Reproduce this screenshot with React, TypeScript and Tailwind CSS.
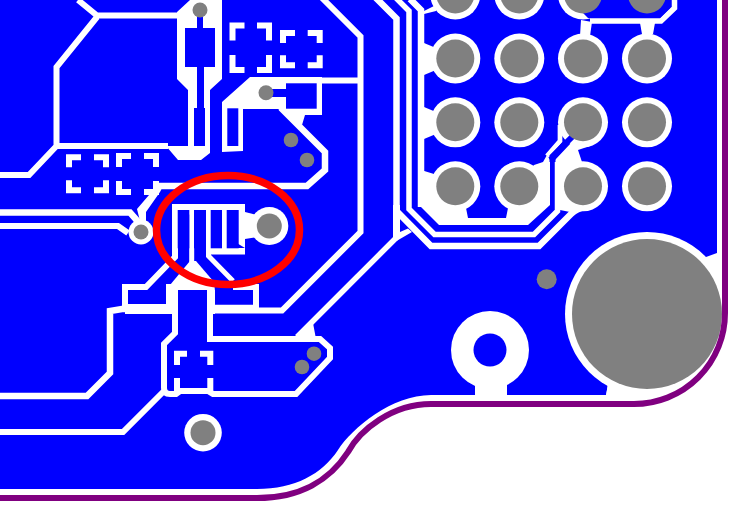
const BLUE = "#0000ff"
const GRAY = "#808080"
const WHITE = "#ffffff"

const bga = [455.3, 519.3, 583, 647]
const rows = [-5.5, 58.5, 122.3, 186.3]

// four L shaped silkscreen corners, drawn as one stroked path
const corners = (x: number, y: number, w: number, h: number, ax: number, ay: number) => {
  const t = 3
  const r = x + w
  const b = y + h
  return [
    `M${x + ax} ${y + t}H${x + t}V${y + ay}`,
    `M${r - ax} ${y + t}H${r - t}V${y + ay}`,
    `M${x + ax} ${b - t}H${x + t}V${b - ay}`,
    `M${r - ax} ${b - t}H${r - t}V${b - ay}`,
  ].join("")
}

const whitePolys = [
  // top component
  "177,12 190,0 222,0 222,79 210,90 210,153 201,160 178,160 166,146 188,146 188,90 177,79",
  // pad with via, upper right
  "250,77 322,77 322,115 305,115 302,125 278,109 243,109 243,151 222,152 222,102",
  // fanout around the left via
  "137,209 155,188 163,186 160,192 146,212 146,222 141,225",
  // fingers and via neck
  "172,204 245,204 245,212 257,215 257,237 245,239 245,254.5 206,254.5 206,248 245,248",
  "190,261 196,261 214,282 215,291 165,291",
  "166,284 178,284 178,314 166,314",
  "233,284 259,284 259,307 253,307 253,290 233,290",
  "207,290 215,290 215,314 207,314",
  "125,304 175,304 175,314 125,314",
  "215,304.5 259,304.5 259,312.7 215,312.7",
  "297,337 313,323 316,339",
  // junction of the outer trace
  "393,205 400,205 400,232 408,228.5 412,232 396.5,241 393,237",
  // hole tab
  "475,380 507,380 507,396 475,396",
  // big pad wedge
  "608,383 606,396 660,396 660,360",
  // BGA plane left
  "421,170 434,174 455,186 466,208 468,218 506,218 508,208 519,186 534,165 543,162 547,155 550,160 550,205 528,225 439,225 421,207",
  // BGA plane right
  "555,160 571,143 590,146 578,150 583,165 583,205 570,212 560,210 555,208",
  // spokes into the first column
  "424,11 436,5 436,11 424,14",
  "424,43 436,48 436,70 424,75",
  "424,107 436,112 436,134 424,139",
  "581,20 580,36 590,36 592,22",
  "640,23 642,34 653,34 655,23",
]

const whiteLines = [
  { d: "M78 0L97 15.5H178M97 17L56.5 67V146H168M56.5 146L29 175H0", w: 6 },
  { d: "M322 -2L360.5 36.5V232L282 310.5H213", w: 6 },
  { d: "M250 80.5H360", w: 6 },
  { d: "M281 108L325 152V170L307 186H158", w: 6.5 },
  { d: "M0 212.5H130L141 225", w: 6.5 },
  { d: "M0 226H118L128 233", w: 6 },
  { d: "M125 306V287H146L175 257V207H241", w: 6 },
  { d: "M191.7 210V262", w: 5 },
  { d: "M208.5 210V256L233 281", w: 5 },
  { d: "M224.5 210V248", w: 5 },
  { d: "M0 396H87L110 373V311L122 309H175", w: 6.5 },
  { d: "M0 432H123L164 391", w: 6 },
  { d: "M175 305V333L164 344V388Q164 394 170 394H176L180 391H208L213 394H296L330 358V348L320 339H210V290", w: 6 },
  { d: "M396.5 237.5L297 337", w: 5.5 },
  { d: "M375 -3L396.5 18.5V211L431 246H539L571 214Q577 208 586 207", w: 6.5 },
  { d: "M396 -2L409 11V209L434.5 234.5H534L557.5 211V160", w: 5.5 },
  { d: "M410 -1L421 10V207", w: 6.5 },
  { d: "M547 156L560 141V125", w: 4.7 },
  { d: "M590 21H661L674.5 8V0", w: 5.5 },
]

const bluePads = [
  { x: 185, y: 28, w: 30, h: 39 },
  { x: 197, y: 17, w: 6, h: 12 },
  { x: 197, y: 66, w: 7, h: 43 },
  { x: 194, y: 108, w: 11, h: 38 },
  { x: 286, y: 83.3, w: 30.7, h: 25.4 },
  { x: 272, y: 89, w: 15, h: 8 },
  { x: 227.3, y: 108.3, w: 11, h: 37.7 },
  { x: 177.7, y: 210, w: 11.6, h: 38.3 },
  { x: 194, y: 210, w: 12, h: 38.3 },
  { x: 210.7, y: 210, w: 11.3, h: 38.3 },
  { x: 226.7, y: 210, w: 12, h: 38.3 },
  { x: 128, y: 290, w: 38, h: 14 },
  { x: 178, y: 290, w: 29, h: 51 },
  { x: 215, y: 290, w: 38, h: 14.5 },
]

const vias = [
  { x: 200, y: 10, r: 7.5 },
  { x: 266, y: 92.7, r: 7.5 },
  { x: 291, y: 140, r: 7.3 },
  { x: 307, y: 160, r: 7.3 },
  { x: 141, y: 232, r: 7.5 },
  { x: 314, y: 353.7, r: 7.3 },
  { x: 302, y: 367, r: 7.3 },
  { x: 546.7, y: 279.3, r: 10 },
]

export default function App() {
  return (
    <div className="w-[752px] h-[522px] bg-white overflow-hidden">
      <svg width="752" height="522" viewBox="0 0 752 522" className="block">
        {/* copper pour */}
        <path
          d="M0 0H717V253L706 257L608 385L606 395H431C392 395 352 428 338 450C322 474 295 489 257 489H0Z"
          fill={BLUE}
        />
        <circle cx="647" cy="314" r="82" fill={WHITE} />

        {whitePolys.map((p) => (
          <polygon key={p} points={p} fill={WHITE} />
        ))}
        {whiteLines.map((l) => (
          <path key={l.d} d={l.d} fill="none" stroke={WHITE} strokeWidth={l.w} />
        ))}
        <g fill="none" stroke={WHITE} strokeWidth="6">
          <path d={corners(229.5, 22.5, 42.5, 50.5, 15, 18)} />
          <path d={corners(280, 30, 42.7, 38.3, 15, 13)} />
          <path d={corners(66, 154.3, 43, 39, 15, 13)} />
          <path d={corners(116, 153, 43, 42, 15, 14)} />
          <path d={`M187 353.7H177V365M200 353.7H210.3V365M177 378V392M210.3 378V392`} />
        </g>

        {bluePads.map((p) => (
          <rect key={`${p.x}-${p.y}`} x={p.x} y={p.y} width={p.w} height={p.h} fill={BLUE} />
        ))}

        {/* BGA balls */}
        {rows.map((y, ri) =>
          bga.map((x, ci) =>
            ri === 0 && ci === 3 ? null : <circle key={`r${ri}${ci}`} cx={x} cy={y} r="25" fill={WHITE} />
          )
        )}
        <polygon points="583,13 588,18 660,18 670,8 670,0 583,0" fill={BLUE} />
        <path d="M576 133L552.5 156.5V162" fill="none" stroke={BLUE} strokeWidth="6" />
        {rows.map((y, ri) =>
          bga.map((x, ci) => <circle key={`g${ri}${ci}`} cx={x} cy={y} r="19" fill={GRAY} />)
        )}

        {/* through holes */}
        <circle cx="269.3" cy="226" r="19" fill={WHITE} />
        <circle cx="269.3" cy="226" r="12.5" fill={GRAY} />
        <circle cx="203" cy="432.7" r="18.8" fill={WHITE} />
        <circle cx="203" cy="432.7" r="12.5" fill={GRAY} />
        <circle cx="141" cy="232" r="12.5" fill={WHITE} />
        <circle cx="490" cy="350" r="39" fill={WHITE} />
        <circle cx="490" cy="350" r="16.5" fill={BLUE} />
        {vias.map((v) => (
          <circle key={`${v.x}-${v.y}`} cx={v.x} cy={v.y} r={v.r} fill={GRAY} />
        ))}
        <circle cx="647" cy="314" r="75" fill={GRAY} />

        {/* board outline */}
        <path
          d="M0 498H257C300 498 330 480 348 452C360 430 392 404 431 404H634A91 91 0 0 0 725 313V0"
          fill="none"
          stroke="#800080"
          strokeWidth="6"
        />
        {/* marker */}
        <ellipse cx="228" cy="230" rx="71.5" ry="54.5" fill="none" stroke="#ff0000" strokeWidth="7.5" />
      </svg>
    </div>
  )
}
